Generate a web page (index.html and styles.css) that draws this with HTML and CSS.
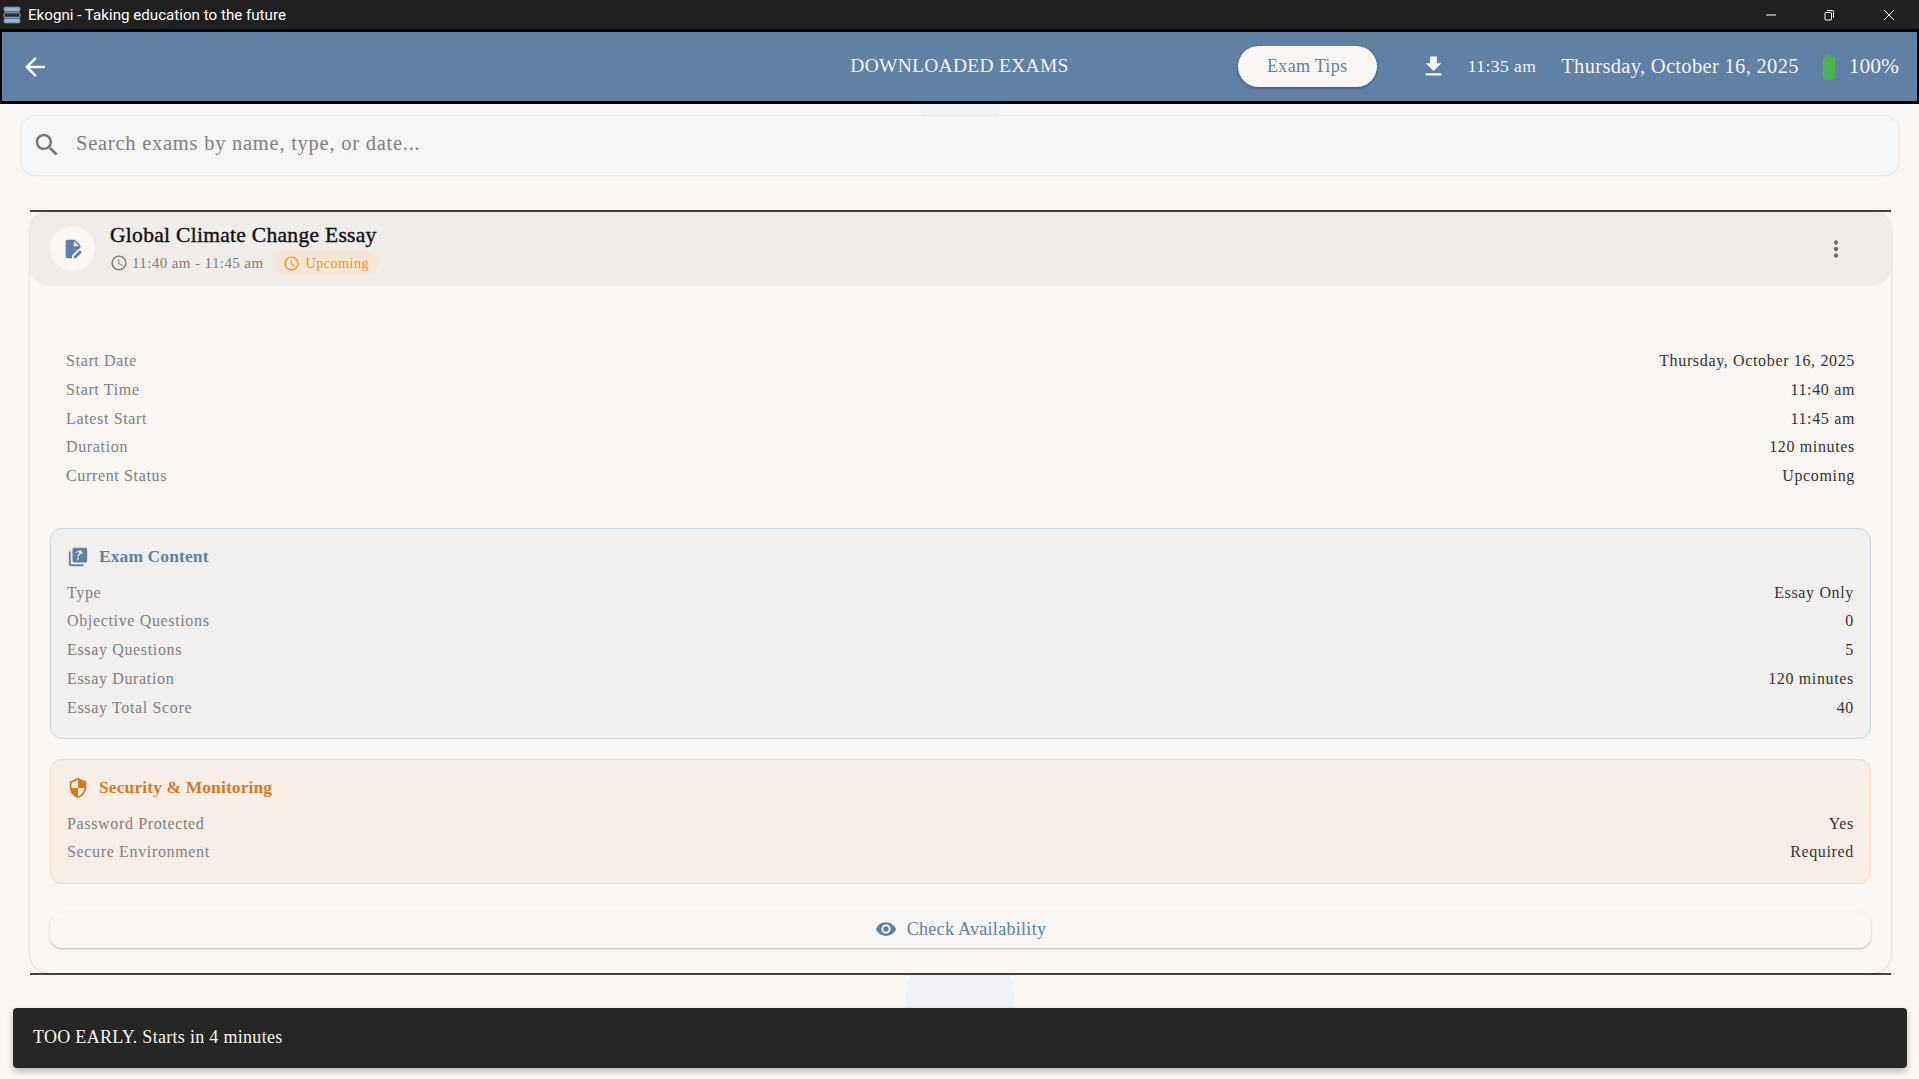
FILE: index.html
```html
<!DOCTYPE html>
<html lang="en">
<head>
<meta charset="utf-8">
<title>Ekogni - Taking education to the future</title>
<link rel="stylesheet" href="styles.css">
</head>
<body>
<div class="titlebar">
  <svg class="app-icon" viewBox="0 0 18 18"><rect x="1" y="1" width="16" height="4.5" rx="1" fill="#9fb6c9" stroke="#4f7ea3"/><rect x="1" y="6.8" width="16" height="4.5" rx="1" fill="#27313a" stroke="#9fb6c9"/><rect x="1" y="12.5" width="16" height="4.5" rx="1" fill="#9fb6c9" stroke="#4f7ea3"/></svg>
  <span class="app-title">Ekogni - Taking education to the future</span>
  <div class="win-controls">
    <svg class="win-btn" viewBox="0 0 12 12"><path d="M1 6h10" stroke="#fff" fill="none"/></svg>
    <svg class="win-btn" viewBox="0 0 12 12"><path d="M2.5 3.5h5.5a.8.8 0 0 1 .5.5v6.5a.8.8 0 0 1-.5.5h-5.5a.8.8 0 0 1-.5-.5v-6.5a.8.8 0 0 1 .5-.5zM4 1.5h5.5a1 1 0 0 1 1 1v6" stroke="#fff" fill="none"/></svg>
    <svg class="win-btn" viewBox="0 0 12 12"><path d="M1 1l10 10M11 1L1 11" stroke="#fff" fill="none"/></svg>
  </div>
</div>
<header class="appbar">
  <svg class="back" viewBox="0 0 24 24"><path d="M20 11H7.83l5.59-5.59L12 4l-8 8 8 8 1.41-1.41L7.83 13H20v-2z"/></svg>
  <h1 class="page-title">DOWNLOADED EXAMS</h1>
  <div class="appbar-right">
    <button class="tips">Exam Tips</button>
    <svg class="dl" viewBox="0 0 24 24"><path d="M19 9h-4V3H9v6H5l7 7 7-7zM5 18v2h14v-2H5z"/></svg>
    <span class="clock">11:35 am</span>
    <span class="date">Thursday, October 16, 2025</span>
    <svg class="battery" viewBox="0 0 24 24"><path d="M15.67 4H14V2h-4v2H8.33C7.6 4 7 4.6 7 5.33v15.33C7 21.4 7.6 22 8.33 22h7.33c.74 0 1.34-.6 1.34-1.33V5.33C17 4.6 16.4 4 15.67 4z"/></svg>
    <span class="pct">100%</span>
  </div>
</header>
<div class="ripple ripple-top"></div>
<div class="ripple ripple-bottom"></div>
<main class="content">
  <div class="search">
    <svg class="search-icon" viewBox="0 0 24 24"><path d="M15.5 14h-.79l-.28-.27C15.41 12.59 16 11.11 16 9.5 16 5.91 13.09 3 9.5 3S3 5.91 3 9.5 5.91 16 9.5 16c1.61 0 3.09-.59 4.23-1.57l.27.28v.79l5 4.99L20.49 19l-4.99-5zm-6 0C7.01 14 5 11.99 5 9.5S7.01 5 9.5 5 14 7.01 14 9.5 11.99 14 9.5 14z"/></svg>
    <span class="search-text">Search exams by name, type, or date...</span>
  </div>
  <section class="card">
    <div class="card-inner">
    <div class="card-head">
      <div class="avatar">
        <svg class="doc" viewBox="0 0 24 24"><path d="M6 2h8l6 6v3.2a3 3 0 0 0-2 .8l-7 7V22H6a2 2 0 0 1-2-2V4a2 2 0 0 1 2-2zM13 3.5V9h5.5zM13 22v-2.2l6.4-6.4 2.2 2.2L15.2 22z"/></svg>
      </div>
      <div class="head-text">
        <div class="exam-name">Global Climate Change Essay</div>
        <div class="exam-meta">
          <svg class="clock-ico" viewBox="0 0 24 24"><path d="M11.99 2C6.47 2 2 6.48 2 12s4.47 10 9.99 10C17.52 22 22 17.52 22 12S17.52 2 11.99 2zM12 20c-4.42 0-8-3.58-8-8s3.58-8 8-8 8 3.58 8 8-3.58 8-8 8zm.5-13H11v6l5.25 3.15.75-1.23-4.5-2.67z"/></svg>
          <span class="meta-time">11:40 am - 11:45 am</span>
          <span class="badge">
            <svg class="badge-ico" viewBox="0 0 24 24"><path d="M11.99 2C6.47 2 2 6.48 2 12s4.47 10 9.99 10C17.52 22 22 17.52 22 12S17.52 2 11.99 2zM12 20c-4.42 0-8-3.58-8-8s3.58-8 8-8 8 3.58 8 8-3.58 8-8 8zm.5-13H11v6l5.25 3.15.75-1.23-4.5-2.67z"/></svg>
            Upcoming
          </span>
        </div>
      </div>
      <svg class="more" viewBox="0 0 24 24"><path d="M12 8c1.1 0 2-.9 2-2s-.9-2-2-2-2 .9-2 2 .9 2 2 2zm0 2c-1.1 0-2 .9-2 2s.9 2 2 2 2-.9 2-2-.9-2-2-2zm0 6c-1.1 0-2 .9-2 2s.9 2 2 2 2-.9 2-2-.9-2-2-2z"/></svg>
    </div>
    <div class="card-body">
      <div class="rows rows-main">
        <div class="row"><span>Start Date</span><span class="val">Thursday, October 16, 2025</span></div>
        <div class="row"><span>Start Time</span><span class="val">11:40 am</span></div>
        <div class="row"><span>Latest Start</span><span class="val">11:45 am</span></div>
        <div class="row"><span>Duration</span><span class="val">120 minutes</span></div>
        <div class="row"><span>Current Status</span><span class="val">Upcoming</span></div>
      </div>
      <div class="panel panel-blue">
        <div class="panel-title">
          <svg class="panel-ico" viewBox="0 0 24 24"><path d="M4 6H2v14c0 1.1.9 2 2 2h14v-2H4V6zm16-4H8c-1.1 0-2 .9-2 2v12c0 1.1.9 2 2 2h12c1.1 0 2-.9 2-2V4c0-1.1-.9-2-2-2zm-7.99 13c-.59 0-1.05-.47-1.05-1.05 0-.59.47-1.04 1.05-1.04.59 0 1.04.45 1.04 1.04-.01.58-.45 1.05-1.04 1.05zm2.5-6.17c-.63.93-1.23 1.21-1.56 1.81-.13.24-.18.4-.18 1.18h-1.52c0-.41-.06-1.08.26-1.65.41-.73 1.18-1.16 1.63-1.8.48-.68.21-1.94-1.14-1.94-.88 0-1.32.67-1.5 1.23l-1.37-.57C11.51 5.96 12.52 5 13.99 5c1.23 0 2.08.56 2.51 1.26.37.6.58 1.73.01 2.57z"/></svg>
          Exam Content
        </div>
        <div class="rows">
          <div class="row"><span>Type</span><span class="val">Essay Only</span></div>
          <div class="row"><span>Objective Questions</span><span class="val">0</span></div>
          <div class="row"><span>Essay Questions</span><span class="val">5</span></div>
          <div class="row"><span>Essay Duration</span><span class="val">120 minutes</span></div>
          <div class="row"><span>Essay Total Score</span><span class="val">40</span></div>
        </div>
      </div>
      <div class="panel panel-orange">
        <div class="panel-title">
          <svg class="panel-ico" viewBox="0 0 24 24"><path d="M12 1L3 5v6c0 5.55 3.84 10.74 9 12 5.16-1.26 9-6.45 9-12V5l-9-4zm0 10.99h7c-.53 4.12-3.28 7.79-7 8.94V12H5V6.3l7-3.11v8.8z"/></svg>
          Security &amp; Monitoring
        </div>
        <div class="rows">
          <div class="row"><span>Password Protected</span><span class="val">Yes</span></div>
          <div class="row"><span>Secure Environment</span><span class="val">Required</span></div>
        </div>
      </div>
      <button class="check">
        <svg class="eye" viewBox="0 0 24 24"><path d="M12 4.5C7 4.5 2.73 7.61 1 12c1.73 4.39 6 7.5 11 7.5s9.27-3.11 11-7.5c-1.73-4.39-6-7.5-11-7.5zM12 17c-2.76 0-5-2.24-5-5s2.24-5 5-5 5 2.24 5 5-2.24 5-5 5zm0-8c-1.66 0-3 1.34-3 3s1.34 3 3 3 3-1.34 3-3-1.34-3-3-3z"/></svg>
        Check Availability
      </button>
    </div>
    </div>
  </section>
</main>
<div class="snackbar">TOO EARLY. Starts in 4 minutes</div>
</body>
</html>
```
FILE: styles.css
```css
* { box-sizing: border-box; }
html, body { margin: 0; padding: 0; height: 100%; overflow: hidden; }
body { background: #f9f5f2; font-family: "Liberation Serif", serif; color: #222; position: relative; }
svg { display: block; flex: none; fill: currentColor; }

.titlebar { height: 29px; background: #202020; color: #fff; display: flex; align-items: center; padding-left: 3px; }
.app-icon { width: 18px; height: 18px; }
.app-title { font-family: Roboto, sans-serif; font-size: 15.15px; margin-left: 7px; }
.win-controls { margin-left: auto; display: flex; }
.win-btn { width: 12px; height: 12px; margin: 0 23px 0 23px; }
.win-btn:last-child { margin-right: 24px; margin-left: 25px; }
.win-btn:first-child { margin-left: 0; }

.appbar { position: relative; z-index: 1; height: 75px; background: #6080a4; border: 3px solid #000; border-left-width: 2px; border-right-width: 2px; display: grid; grid-template-columns: 1fr auto 1fr; align-items: center; color: #f9f5f2; padding: 0 18px; }
.back { width: 30px; height: 30px; }
.page-title { margin: 0 0 2px; font-size: 19.5px; font-weight: 400; letter-spacing: .28px; }
.appbar-right { justify-self: end; display: flex; align-items: center; }
.tips { width: 139px; height: 41px; border: 0; border-radius: 21px; background: #f9f5f2; color: #6080a4; font: 18px "Liberation Serif", serif; letter-spacing: .3px; box-shadow: 0 1px 3px rgba(0,0,0,.35); padding: 0; }
.dl { width: 27px; height: 27px; margin-left: 43px; }
.clock { font-size: 17.5px; margin-left: 21px; letter-spacing: .45px; }
.date { font-size: 20.5px; margin-left: 25px; letter-spacing: .32px; }
.battery { width: 30px; height: 30px; color: #4caf50; margin-left: 15px; }
.pct { font-size: 21.5px; margin-left: 5px; }

.ripple { position: absolute; border-radius: 50%; background: #eff1f5; }
.ripple-top { left: 920px; top: 64px; width: 80px; height: 80px; }
.ripple-bottom { left: 906px; top: 943px; width: 108px; height: 108px; }

.content { position: relative; padding: 11px 19px 0 20px; }
.search { height: 61px; background: #f5f5f5; border: 1px solid #e9e6e3; border-radius: 16px; display: flex; align-items: center; padding: 0 0 0 11px; box-shadow: 0 1px 1px rgba(0,0,0,.03); }
.search-icon { width: 30px; height: 30px; margin-bottom: 1px; color: #757575; }
.search-text { font-size: 20.5px; color: #808080; margin: 0 0 5px 14px; letter-spacing: .75px; }

.card { margin: 34px 9px 0 10px; border-top: 2px solid #444; border-bottom: 2px solid #444; }
.card-inner { border-radius: 19px; background: #f9f5f2; box-shadow: 0 0 3px rgba(0,0,0,.18); }
.card-head { height: 74px; background: #f0ece9; border-radius: 19px; display: flex; align-items: center; padding: 0 42px 0 20px; }
.avatar { width: 45px; height: 45px; border-radius: 50%; background: #f9f5f2; display: flex; align-items: center; justify-content: center; margin-bottom: 1px; }
.doc { width: 22px; height: 22px; color: #6080a4; }
.head-text { margin-left: 15px; flex: 1; }
.exam-name { font-size: 21.5px; color: #111; letter-spacing: .3px; -webkit-text-stroke: .4px #111; }
.exam-meta { display: flex; align-items: center; margin-top: 3px; font-size: 15px; color: #808080; letter-spacing: .4px; }
.clock-ico { width: 18px; height: 18px; margin-right: 4px; }
.badge { display: flex; align-items: center; margin-left: 10px; height: 24px; padding: 0 9px 0 10px; border-radius: 12px; background: #f6e6d7; color: #ff9800; font-size: 14.3px; }
.badge-ico { width: 17px; height: 17px; margin-right: 5px; }
.more { width: 26px; height: 26px; margin-bottom: 1px; color: #6e6e6e; }

.card-body { padding: 61px 20px 25px; }
.rows { display: flex; flex-direction: column; }
.row { display: flex; justify-content: space-between; height: 28.7px; align-items: center; font-size: 16px; color: #7f7f7f; letter-spacing: .65px; padding: 0 16px; }
.val { color: #333; }
.rows-main { margin-bottom: 37.5px; }
.panel { border-radius: 12px; border: 1px solid; padding: 14px 0 9px; margin-bottom: 20px; }
.panel-blue { background: #f2f0ee; border-color: #cfd7df; height: 211px; }
.panel-orange { background: #f8eee8; border-color: #f5dcc4; height: 125px; margin-bottom: 28px; }
.panel-title { display: flex; align-items: center; font-size: 17.5px; font-weight: 700; padding: 0 16px; height: 28px; margin-bottom: 7.5px; letter-spacing: .1px; }
.panel-blue .panel-title { color: #6080a4; }
.panel-orange .panel-title { color: #d97a1c; }
.panel-ico { width: 22px; height: 22px; margin-right: 10px; }
.check { display: flex; width: 100%; height: 36px; align-items: center; justify-content: center; background: #f9f5f2; border: 0; border-radius: 12px; box-shadow: 0 1px 2px rgba(0,0,0,.25); color: #6080a4; font: 18px "Liberation Serif", serif; letter-spacing: .3px; padding-bottom: 2px; }
.eye { width: 22px; height: 22px; margin-right: 10px; }

.snackbar { position: absolute; left: 13px; top: 1008px; width: 1894px; height: 60px; display: flex; align-items: center; padding: 0 0 1px 20px; background: #262625; border-radius: 4px; box-shadow: 0 3px 6px rgba(0,0,0,.25); color: #f9f5f2; font-size: 18px; letter-spacing: .3px; }
```
